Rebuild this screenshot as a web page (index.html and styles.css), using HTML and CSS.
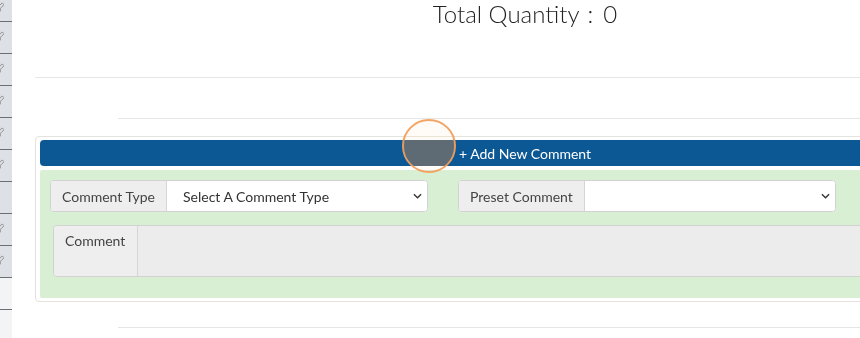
FILE: index.html
```html
<!DOCTYPE html>
<html lang="en">
<head>
    <meta charset="UTF-8">
    <meta name="viewport" content="width=device-width, initial-scale=1.0">
    <title>Add Comment</title>
    <link rel="stylesheet" href="styles.css">
</head>
<body>
    <div class="page">
        <div class="sidebar">
            <div class="side-row first"><svg class="edit" viewBox="0 0 12 12"><path d="M1 3h5M1 3v7h7V7M5 8l1-3 4-4 2 2-4 4z" fill="none" stroke="#8a8d92" stroke-width="1"/></svg></div>
            <div class="side-row"><svg class="edit" viewBox="0 0 12 12"><path d="M1 3h5M1 3v7h7V7M5 8l1-3 4-4 2 2-4 4z" fill="none" stroke="#8a8d92" stroke-width="1"/></svg></div>
            <div class="side-row"><svg class="edit" viewBox="0 0 12 12"><path d="M1 3h5M1 3v7h7V7M5 8l1-3 4-4 2 2-4 4z" fill="none" stroke="#8a8d92" stroke-width="1"/></svg></div>
            <div class="side-row"><svg class="edit" viewBox="0 0 12 12"><path d="M1 3h5M1 3v7h7V7M5 8l1-3 4-4 2 2-4 4z" fill="none" stroke="#8a8d92" stroke-width="1"/></svg></div>
            <div class="side-row"><svg class="edit" viewBox="0 0 12 12"><path d="M1 3h5M1 3v7h7V7M5 8l1-3 4-4 2 2-4 4z" fill="none" stroke="#8a8d92" stroke-width="1"/></svg></div>
            <div class="side-row"><svg class="edit" viewBox="0 0 12 12"><path d="M1 3h5M1 3v7h7V7M5 8l1-3 4-4 2 2-4 4z" fill="none" stroke="#8a8d92" stroke-width="1"/></svg></div>
            <div class="side-row"></div>
            <div class="side-row"><svg class="edit" viewBox="0 0 12 12"><path d="M1 3h5M1 3v7h7V7M5 8l1-3 4-4 2 2-4 4z" fill="none" stroke="#8a8d92" stroke-width="1"/></svg></div>
            <div class="side-row"><svg class="edit" viewBox="0 0 12 12"><path d="M1 3h5M1 3v7h7V7M5 8l1-3 4-4 2 2-4 4z" fill="none" stroke="#8a8d92" stroke-width="1"/></svg></div>
            <div class="side-row light"></div>
            <div class="side-row light last"></div>
        </div>

        <div class="main">
            <h2 class="total">Total Quantity<span class="colon">:</span>0</h2>
            <hr class="rule">
            <hr class="rule indent">

            <div class="comment-panel">
                <button type="button" class="add-btn">+ Add New Comment</button>
                <div class="comment-form">
                    <div class="form-row">
                        <div class="input-group">
                            <span class="addon">Comment Type</span>
                            <div class="select-wrap">
                                <select class="field">
                                    <option>Select A Comment Type</option>
                                </select>
                                <svg class="chevron" viewBox="0 0 10 6"><path d="M1 1l4 4 4-4" fill="none" stroke="#333" stroke-width="1.5"/></svg>
                            </div>
                        </div>
                        <div class="input-group">
                            <span class="addon">Preset Comment</span>
                            <div class="select-wrap">
                                <select class="field">
                                    <option></option>
                                </select>
                                <svg class="chevron" viewBox="0 0 10 6"><path d="M1 1l4 4 4-4" fill="none" stroke="#333" stroke-width="1.5"/></svg>
                            </div>
                        </div>
                    </div>
                    <div class="input-group comment-box">
                        <span class="addon top">Comment</span>
                        <textarea class="field area"></textarea>
                    </div>
                </div>
            </div>

            <hr class="rule indent bottom">
        </div>
    </div>

    <div class="click-mark"></div>
</body>
</html>
```

FILE: styles.css
```css
html, body {
    background: #fff;
}
body {
    margin: 0;
    font-family: Lato, "Open Sans", sans-serif;
    font-size: 14px;
    color: #333;
    overflow: hidden;
}
.page {
    display: flex;
    width: 1100px;
}
.sidebar {
    width: 12px;
    height: 338px;
    overflow: hidden;
    flex-shrink: 0;
    background: #dde0e4;
}
.side-row {
    height: 32px;
    border-bottom: 1px solid #6b6e73;
    padding-top: 9px;
    box-sizing: border-box;
}
.side-row.first {
    height: 22px;
    padding-top: 2px;
}
.side-row.light {
    background: #f3f4f5;
}
.side-row.last {
    border-bottom: none;
}
.edit {
    display: block;
    width: 11px;
    height: 11px;
    margin-left: -7px;
}
.main {
    width: 980px;
    flex-shrink: 0;
    padding-left: 23px;
}
.total {
    margin: 0;
    text-align: center;
    font-size: 24px;
    font-weight: 300;
    line-height: 27px;
    color: #222;
}
.colon {
    margin: 0 10px 0 8px;
}
.rule {
    border: none;
    border-top: 1px solid #e6e6e6;
    margin: 50px 0 0;
}
.rule.indent {
    margin: 40px 83px 0;
}
.rule.bottom {
    margin-top: 25px;
}
.comment-panel {
    margin-top: 17px;
    border: 1px solid #e4e2dc;
    border-radius: 4px;
    padding: 3px 4px 3px;
}
.add-btn {
    display: block;
    width: 100%;
    height: 26px;
    border: none;
    border-radius: 4px;
    background: #0b5894;
    color: #fff;
    font-family: inherit;
    font-size: 14px;
    padding: 0;
}
.comment-form {
    margin-top: 4px;
    background: #d8efd4;
    padding: 10px 10px 21px;
    border-radius: 2px;
}
.form-row {
    display: flex;
    gap: 30px;
}
.input-group {
    display: flex;
    width: 378px;
    height: 32px;
    border: 1px solid #d2d2d2;
    border-radius: 4px;
    box-sizing: border-box;
    overflow: hidden;
    background: #fff;
}
.addon {
    display: flex;
    align-items: center;
    padding: 0 11px;
    background: #eee;
    border-right: 1px solid #d6d6d6;
    color: #444;
    white-space: nowrap;
}
.select-wrap {
    flex: 1;
    display: flex;
    align-items: center;
    position: relative;
}
.field {
    flex: 1;
    align-self: stretch;
    border: none;
    background: #fff;
    font-family: inherit;
    font-size: 14px;
    color: #333;
    padding: 0 10px 0 16px;
    outline: none;
    appearance: none;
}
.chevron {
    position: absolute;
    right: 5px;
    width: 9px;
    height: 6px;
}
.comment-box {
    width: auto;
    height: 52px;
    margin: 13px 0 0 3px;
    background: #ececec;
}
.addon.top {
    align-items: flex-start;
    padding-top: 6px;
    width: 84px;
    box-sizing: border-box;
}
.area {
    background: #ececec;
    resize: none;
}
.click-mark {
    position: absolute;
    left: 402px;
    top: 119px;
    width: 50px;
    height: 50px;
    border-radius: 50%;
    border: 2px solid rgba(243, 158, 88, 0.95);
}
.click-mark::before,
.click-mark::after {
    content: "";
    position: absolute;
    inset: 0;
    border-radius: 50%;
}
.click-mark::before {
    background: rgba(150, 140, 130, 0.85);
    mix-blend-mode: saturation;
}
.click-mark::after {
    background: rgba(255, 236, 214, 0.2);
}
```
